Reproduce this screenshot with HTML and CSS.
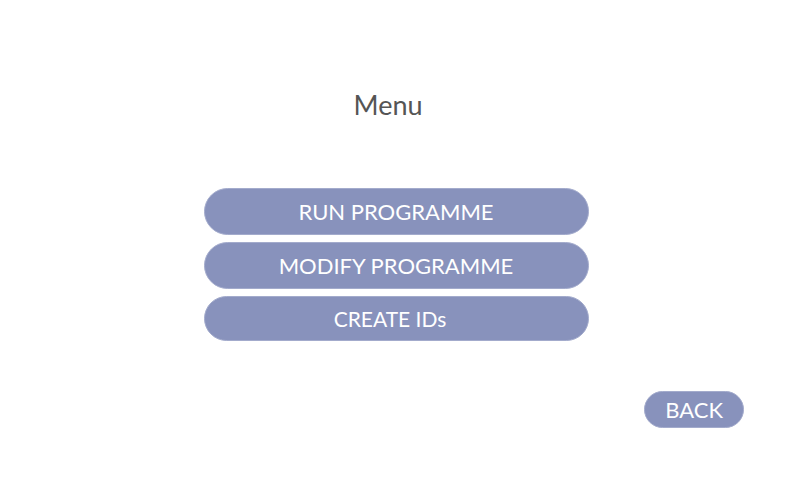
FILE: index.html
```html
<!DOCTYPE html>
<html lang="en">
<head>
<meta charset="utf-8">
<meta name="viewport" content="width=device-width, initial-scale=1">
<title>Menu</title>
<link rel="stylesheet" href="styles.css">
</head>
<body>
<main class="screen">
  <h1 class="title">Menu</h1>
  <nav class="menu" aria-label="Menu">
    <button class="pill" type="button">RUN PROGRAMME</button>
    <button class="pill" type="button">MODIFY PROGRAMME</button>
    <button class="pill pill-short" type="button">CREATE IDs</button>
  </nav>
  <footer class="footer">
    <button class="pill back" type="button">BACK</button>
  </footer>
</main>
</body>
</html>
```
FILE: styles.css
```css
* { box-sizing: border-box; }
body {
  margin: 0;
  background: #fff;
  color: #555;
  font-family: Lato, "Liberation Sans", sans-serif;
}
.screen {
  display: flex;
  flex-direction: column;
  padding: 87px 56px 48px 48px;
}
.title {
  margin: 0;
  padding-right: 16px;
  font-size: 27px;
  font-weight: 400;
  line-height: 36px;
  text-align: center;
}
.menu {
  display: flex;
  flex-direction: column;
  gap: 7px;
  width: 100%;
  max-width: 385px;
  margin: 65px auto 0;
}
.pill {
  padding: 9px 24px;
  border: 1px solid #a3abcc;
  border-radius: 24px;
  background: #8892bc;
  color: #fff;
  font: inherit;
  font-size: 22px;
  line-height: 27px;
}
.pill-short {
  padding: 8px 36px 8px 24px;
  font-size: 21px;
}
.footer {
  display: flex;
  justify-content: flex-end;
  margin-top: 50px;
}
.back {
  padding: 4px 20px;
}
```
